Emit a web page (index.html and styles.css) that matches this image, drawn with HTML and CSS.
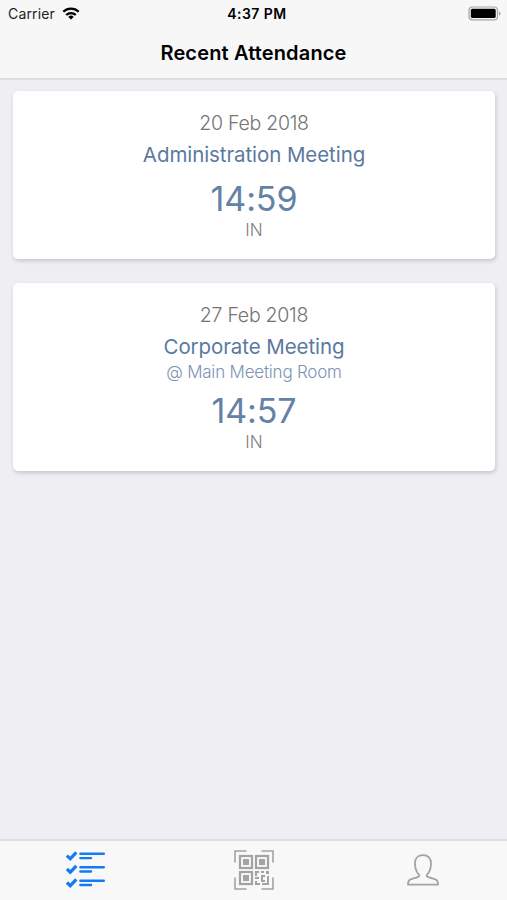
FILE: index.html
```html
<!DOCTYPE html>
<html lang="en">

    <head>
        <meta charset="utf-8" />
        <meta name="viewport" content="width=device-width, initial-scale=1.0" />
        <title>Recent Attendance</title>

        <link rel="stylesheet" href="styles.css">
    </head>

    <body>
        <header class="header">
            <div class="status">
                <div class="status_carrier">
                    <span>Carrier</span>
                    <svg class="status_wifi" width="18" height="14" viewBox="0 0 18 14" fill="none" stroke="#000" stroke-width="2.3">
                        <path d="M1.3 4.8a11 11 0 0 1 15.4 0" />
                        <path d="M4.2 8a6.9 6.9 0 0 1 9.6 0" />
                        <path d="M9 12.6L6.3 9.9a3.9 3.9 0 0 1 5.4 0z" fill="#000" stroke="none" />
                    </svg>
                </div>
                <span class="status_time">4:37 PM</span>
                <svg class="status_battery" width="33" height="15" viewBox="0 0 33 15">
                    <rect x="1" y="1" width="28.5" height="12.8" rx="3.4" fill="none" stroke="#a4a4a4" stroke-width="1.2" />
                    <rect x="2.8" y="2.8" width="24.9" height="9.2" rx="1.6" fill="#000" />
                    <path d="M31 5.4q1.6.5 1.6 2t-1.6 2z" fill="#a4a4a4" />
                </svg>
            </div>
            <h1 class="header_title">Recent Attendance</h1>
        </header>

        <main class="list">
            <article class="card">
                <p class="card_date">20 Feb 2018</p>
                <h2 class="card_title">Administration Meeting</h2>
                <p class="card_time">14:59</p>
                <p class="card_type">IN</p>
            </article>

            <article class="card">
                <p class="card_date">27 Feb 2018</p>
                <h2 class="card_title">Corporate Meeting</h2>
                <p class="card_place">@ Main Meeting Room</p>
                <p class="card_time">14:57</p>
                <p class="card_type">IN</p>
            </article>
        </main>

        <nav class="tabs">
            <a class="tab tab--active" aria-label="Attendance">
                <svg width="40" height="40" viewBox="0 0 40 40" fill="none" stroke="currentColor" stroke-linecap="round">
                    <g stroke-width="2.4">
                        <path d="M15.4 3.8h23.4M15.4 17.2h23.4M15.4 30.7h23.4" />
                        <path d="M15.4 8.1H26M15.4 21.5H26M15.4 35H26" />
                    </g>
                    <g stroke-width="3.2" stroke-linecap="butt">
                        <path d="M1.9 5.6l3.4 3.2 6-6.4" />
                        <path d="M1.9 19l3.4 3.2 6-6.4" />
                        <path d="M1.9 32.5l3.4 3.2 6-6.4" />
                    </g>
                </svg>
            </a>
            <a class="tab" aria-label="Scan">
                <svg width="40" height="40" viewBox="0 0 40 40" fill="none" stroke="currentColor">
                    <path d="M1 12.5V1h11.5M27.5 1H39v11.5M39 27.5V39H27.5M12.5 39H1V27.5" stroke-width="1.6" />
                    <g stroke-width="2.2">
                        <rect x="6" y="6" width="12" height="12" />
                        <rect x="22" y="6" width="12" height="12" />
                        <rect x="6" y="22" width="12" height="12" />
                    </g>
                    <g fill="currentColor" stroke="none">
                        <rect x="9" y="9" width="6" height="6" />
                        <rect x="25" y="9" width="6" height="6" />
                        <rect x="9" y="25" width="6" height="6" />
                        <path d="M21 21h4v2h-2v3h-2zM27 21h3v2h-3zM32 21h3v3h-3zM21 27h4v2h-4zM21 31h2v2h3v2h-5zM27 25h4v2h-2v3h2v2h-4zM33 26h2v9h-7v-2h5z" />
                    </g>
                </svg>
            </a>
            <a class="tab" aria-label="Profile">
                <svg width="32" height="32" viewBox="0 0 32 32" fill="none" stroke="currentColor" stroke-width="1.8" stroke-linejoin="round">
                    <path d="M16 1.2c-5 0-8 3.2-8 8 0 5.3 1.4 8.8 3.9 11.4.8.9.6 1.800-.6 2.200L3.600 25.300C1.600 26 1 27.200 1 30.600h30c0-3.400-.6-4.600-2.600-5.300l-7.700-2.500c-1.200-.4-1.400-1.300-.6-2.200C22.600 18 24 14.500 24 9.200c0-4.800-3-8-8-8z" />
                </svg>
            </a>
        </nav>
    </body>

</html>
```
FILE: styles.css
```css
* {
    padding: 0;
    margin: 0;
    box-sizing: border-box;
}

body {
    display: flex;
    flex-direction: column;
    height: 100vh;
    font-family: Inter, "Liberation Sans", sans-serif;
    background-color: #eeeef3;
    color: #000;
}

.header {
    height: 80px;
    background-color: #f7f7f8;
    border-bottom: 2px solid #dedee1;
}

.status {
    display: grid;
    grid-template-columns: 1fr auto 1fr;
    align-items: center;
    height: 27px;
    padding: 0 6px 0 8px;
    font-size: 14px;
}

.status_carrier {
    display: flex;
    align-items: center;
    gap: 7px;
    color: #222;
    letter-spacing: .15px;
}

.status_time {
    padding-left: 5px;
    font-weight: 600;
    letter-spacing: .45px;
}

.status_battery {
    justify-self: end;
}

.header_title {
    font-size: 20px;
    line-height: 52px;
    font-weight: 600;
    letter-spacing: .15px;
    text-align: center;
}

.list {
    flex: 1;
    display: flex;
    flex-direction: column;
    gap: 24px;
    padding: 11px 12px 0 13px;
}

.card {
    padding: 16px 0 18px;
    background-color: #fff;
    border-radius: 5px;
    box-shadow: 1px 2px 4px rgba(0, 0, 0, .17);
    text-align: center;
}

.card_date {
    font-size: 19.5px;
    line-height: 32px;
    font-weight: 300;
    letter-spacing: -.25px;
    color: #747474;
}

.card_title {
    font-size: 20.5px;
    line-height: 31px;
    font-weight: 400;
    letter-spacing: -.08px;
    color: #5b799f;
}

.card_place {
    font-size: 17px;
    line-height: 20px;
    font-weight: 300;
    letter-spacing: -.2px;
    color: #7d93b3;
}

.card_time {
    margin-top: 9px;
    font-size: 34px;
    line-height: 40px;
    letter-spacing: -.1px;
    color: #6481a6;
}

.card_type {
    font-size: 17px;
    line-height: 22px;
    font-weight: 300;
    color: #808080;
}

.tabs {
    display: grid;
    grid-template-columns: repeat(3, 1fr);
    height: 61px;
    padding-bottom: 2px;
    background-color: #f8f8f9;
    border-top: 2px solid #dedee1;
}

.tab {
    display: flex;
    justify-content: center;
    align-items: center;
    color: #a3a3a3;
}

.tab--active {
    color: #1479f5;
}
```
